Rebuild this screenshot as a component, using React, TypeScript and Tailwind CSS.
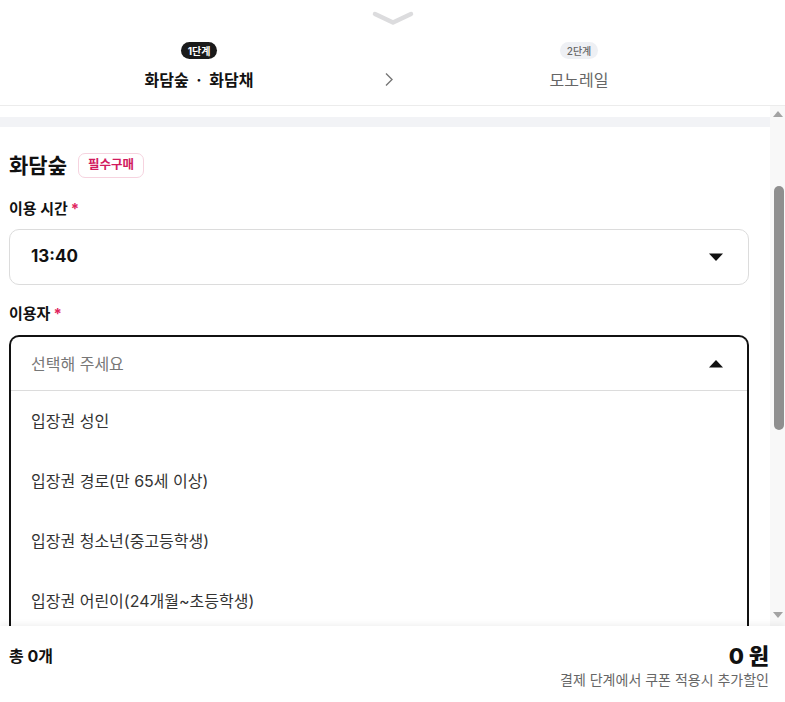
import React from "react";

const options = [
  "입장권 성인",
  "입장권 경로(만 65세 이상)",
  "입장권 청소년(중고등학생)",
  "입장권 어린이(24개월~초등학생)",
];

function Caret({ up }: { up?: boolean }) {
  return (
    <svg width="16" height="9" viewBox="0 0 16 9" className="shrink-0">
      {up ? <path d="M1 8.5 L8 1 L15 8.5 Z" fill="#111" /> : <path d="M1 0.5 L8 8 L15 0.5 Z" fill="#111" />}
    </svg>
  );
}

export default function App() {
  return (
    <div className="w-[785px] h-[702px] bg-white overflow-hidden flex flex-col font-['Inter','Noto_Sans_CJK_KR',sans-serif] text-[#111]">
      {/* step header */}
      <div className="h-[106px] shrink-0 border-b border-[#ececec] flex flex-col">
        <div className="flex justify-center pt-[10px] h-[38px]">
          <svg width="42" height="16" viewBox="0 0 42 16">
            <path d="M3 4 L21 12.5 L39 4" stroke="#dcdcde" strokeWidth="4.5" fill="none" strokeLinecap="round" strokeLinejoin="round" />
          </svg>
        </div>
        <div className="flex items-start pl-[79px] pt-[4px]">
          <div className="w-[240px] flex flex-col items-center">
            <span className="h-[17px] px-[7px] rounded-full bg-[#1a1a1a] text-white text-[10px] font-bold flex items-center leading-none">1단계</span>
            <span className="mt-[11px] text-[16px] font-bold leading-[20px] whitespace-pre">화담숲  ·  화담채</span>
          </div>
          <div className="w-[140px] flex justify-center pt-[30px]">
            <svg width="10" height="15" viewBox="0 0 10 15">
              <path d="M2 1.5 L8 7.5 L2 13.5" stroke="#777" strokeWidth="1.4" fill="none" />
            </svg>
          </div>
          <div className="w-[240px] flex flex-col items-center">
            <span className="h-[17px] px-[7px] rounded-full bg-[#eef0f4] text-[#666] text-[10px] font-medium flex items-center leading-none">2단계</span>
            <span className="mt-[11px] text-[16px] text-[#666] leading-[20px]">모노레일</span>
          </div>
        </div>
      </div>

      {/* scroll area */}
      <div className="h-[520px] shrink-0 flex">
        <div className="flex-1 overflow-hidden">
          <div className="h-[11px]" />
          <div className="h-[10px] bg-[#f2f3f6]" />
          <div className="pl-[9px] pr-[21px] pt-[25px]">
            <div className="flex items-center gap-[11px] h-[26px]">
              <h2 className="text-[21px] font-bold leading-none">화담숲</h2>
              <span className="h-[25px] px-[9px] rounded-[7px] border border-[#f6d3df] text-[#d11a5e] text-[12.5px] font-bold flex items-center">필수구매</span>
            </div>
            <div className="mt-[22px] text-[15px] font-bold leading-[18px]">
              이용 시간<span className="text-[#e0245e] ml-[3px]">*</span>
            </div>
            <div className="mt-[11px] h-[56px] rounded-[10px] border border-[#dcdcdc] flex items-center justify-between pl-[21px] pr-[24px]">
              <span className="text-[17px] font-bold">13:40</span>
              <Caret />
            </div>
            <div className="mt-[20px] text-[15px] font-bold leading-[18px]">
              이용자<span className="text-[#e0245e] ml-[3px]">*</span>
            </div>
            <div className="mt-[12px] rounded-t-[10px] border-2 border-[#111] border-b-0">
              <div className="h-[54px] flex items-center justify-between pl-[20px] pr-[23px] border-b border-[#dcdcdc]">
                <span className="text-[16px] text-[#777]">선택해 주세요</span>
                <Caret up />
              </div>
              {options.map((o) => (
                <div key={o} className="h-[60px] flex items-center pl-[20px] text-[16px] text-[#333]">
                  {o}
                </div>
              ))}
            </div>
          </div>
        </div>
        {/* scrollbar */}
        <div className="w-[15px] bg-[#f8f8f8] flex flex-col items-center">
          <svg width="10" height="6" viewBox="0 0 10 6" className="mt-[5px]">
            <path d="M0 6 L5 0 L10 6 Z" fill="#a3a3a3" />
          </svg>
          <div className="mt-[69px] w-[10px] ml-[3px] h-[244px] rounded-[5px] bg-[#8f8f8f]" />
          <div className="flex-1" />
          <svg width="10" height="6" viewBox="0 0 10 6" className="mb-[8px]">
            <path d="M0 0 L5 6 L10 0 Z" fill="#a3a3a3" />
          </svg>
        </div>
      </div>

      {/* footer */}
      <div className="flex-1 relative bg-white shadow-[0_-2px_6px_rgba(0,0,0,0.06)] flex justify-between px-[9px] pt-[18px] pr-[16px]">
        <span className="text-[16px] font-bold leading-[24px]">총 0개</span>
        <div className="flex flex-col items-end">
          <span className="text-[22px] font-extrabold leading-[24px]">0 원</span>
          <span className="mt-[4px] text-[14px] text-[#666] leading-[16px]">결제 단계에서 쿠폰 적용시 추가할인</span>
        </div>
      </div>
    </div>
  );
}
